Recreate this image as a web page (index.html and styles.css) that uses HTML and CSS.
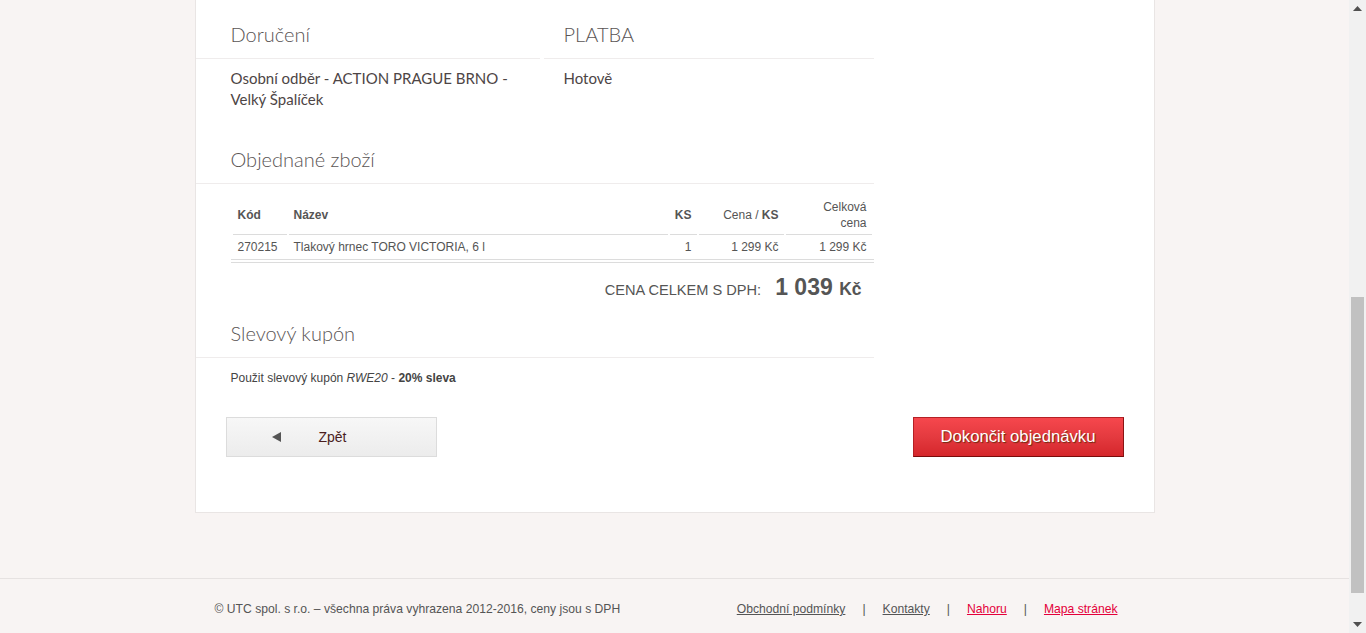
FILE: index.html
```html
<!DOCTYPE html>
<html lang="cs">
<head>
<meta charset="utf-8">
<title>Shrnutí objednávky</title>
<link rel="stylesheet" href="styles.css">
</head>
<body>
<div class="page">
  <div class="viewport">
    <main class="card">
      <div class="summary">
        <section class="col col-left">
          <h2 class="sec-title">Doručení</h2>
          <p class="detail">Osobní odběr - ACTION PRAGUE BRNO - Velký Špalíček</p>
        </section>
        <section class="col col-right">
          <h2 class="sec-title">PLATBA</h2>
          <p class="detail">Hotově</p>
        </section>
      </div>

      <section class="block">
        <h2 class="sec-title sec-spaced">Objednané zboží</h2>
        <div class="table-wrap">
          <table class="items">
            <thead>
              <tr>
                <th class="c-code">Kód</th>
                <th class="c-name">Název</th>
                <th class="c-num c-ks">KS</th>
                <th class="c-num c-price"><span class="light">Cena /</span> KS</th>
                <th class="c-num c-total light">Celková<br>cena</th>
              </tr>
            </thead>
            <tbody>
              <tr>
                <td>270215</td>
                <td>Tlakový hrnec TORO VICTORIA, 6 l</td>
                <td class="c-num">1</td>
                <td class="c-num">1 299 Kč</td>
                <td class="c-num">1 299 Kč</td>
              </tr>
            </tbody>
          </table>
        </div>
        <div class="total">
          <span class="total-label">CENA CELKEM S DPH:</span>
          <span class="total-value">1 039 <span class="total-cur">Kč</span></span>
        </div>
      </section>

      <section class="block">
        <h2 class="sec-title sec-coupon">Slevový kupón</h2>
        <p class="coupon">Použit slevový kupón <em>RWE20</em> - <strong>20% sleva</strong></p>
      </section>

      <div class="actions">
        <a class="btn btn-back" href="#"><svg class="arrow" width="9" height="10" viewBox="0 0 9 10"><path d="M0 5 9 0v10z" fill="#555"/></svg><span>Zpět</span></a>
        <a class="btn btn-finish" href="#">Dokončit objednávku</a>
      </div>
    </main>

    <footer class="footer">
      <div class="footer-inner">
        <p class="copy">© UTC spol. s r.o. – všechna práva vyhrazena 2012-2016, ceny jsou s DPH</p>
        <nav class="footer-links">
          <a href="#">Obchodní podmínky</a>
          <span class="sep">|</span>
          <a href="#">Kontakty</a>
          <span class="sep">|</span>
          <a class="red" href="#">Nahoru</a>
          <span class="sep">|</span>
          <a class="red" href="#">Mapa stránek</a>
        </nav>
      </div>
    </footer>
  </div>

  <div class="scrollbar">
    <div class="sb-btn"><svg width="9" height="5" viewBox="0 0 9 5"><path d="M4.5 0 9 5H0z" fill="#505050"/></svg></div>
    <div class="sb-track">
      <div class="sb-space"></div>
      <div class="sb-thumb"></div>
    </div>
    <div class="sb-btn"><svg width="9" height="5" viewBox="0 0 9 5"><path d="M0 0h9L4.5 5z" fill="#505050"/></svg></div>
  </div>
</div>
</body>
</html>
```

FILE: styles.css
```css
* { box-sizing: border-box; }

html, body {
  margin: 0;
  padding: 0;
}

body {
  background: #f8f4f3;
  font-family: "Liberation Sans", Arial, sans-serif;
  color: #555;
}

.page {
  display: flex;
  height: 633px;
  overflow: hidden;
}

.viewport {
  flex: 1;
  display: flex;
  flex-direction: column;
}

/* ---------- card ---------- */
.card {
  width: 960px;
  margin: 0 auto;
  background: #fff;
  border: 1px solid #e9e5e4;
  border-top: none;
  padding: 23px 0 55px;
}

.summary {
  display: flex;
  width: 678px;
  gap: 4px;
}

.col-left { width: 344px; }
.col-right { width: 330px; }

.sec-title {
  margin: 0;
  font-family: "Lato", "Open Sans", sans-serif;
  font-weight: 300;
  font-size: 20px;
  line-height: 23px;
  color: #5a5555;
  padding: 0 0 12px 35px;
  border-bottom: 1px solid #efecec;
}

.col-right .sec-title,
.col-right .detail {
  padding-left: 20px;
}

.detail {
  margin: 0;
  padding: 9px 0 0 35px;
  font-family: "Lato", "Open Sans", sans-serif;
  font-size: 15px;
  line-height: 21px;
  color: #4d4545;
  width: 335px;
}

.col-right .detail { width: auto; }

.block { width: 678px; }

.sec-spaced { padding-top: 38px; }
.sec-coupon { padding-top: 18px; }

/* ---------- table ---------- */
.table-wrap {
  margin: 12px 0 0 35px;
  width: 643px;
  border-bottom: 1px solid #dcdcdc;
  padding-bottom: 2px;
}

.items {
  width: 100%;
  border-collapse: separate;
  border-spacing: 2px 0;
  font-size: 12px;
  line-height: 16px;
  color: #555;
  border-bottom: 1px solid #dcdcdc;
}

.items th {
  font-weight: bold;
  text-align: left;
  padding: 3px 5px 3px;
  border-bottom: 1px solid #dcdcdc;
  vertical-align: middle;
}

.items th.light,
.items .light { font-weight: normal; }

.items td {
  padding: 4px 5px 4px;
}

.items .c-num { text-align: right; }
.c-code { width: 54px; }
.c-ks { width: 27px; }
.c-price { width: 85px; }
.c-total { width: 86px; }

.total {
  display: flex;
  justify-content: flex-end;
  align-items: baseline;
  gap: 14px;
  padding: 11px 12px 0 0;
  height: 41px;
}

.total-label {
  font-size: 14.6px;
  color: #555;
}

.total-value {
  font-size: 23px;
  font-weight: bold;
  color: #555;
}

.total-cur { font-size: 17.5px; }

/* ---------- coupon ---------- */
.coupon {
  margin: 0;
  padding: 12px 0 0 35px;
  font-size: 12px;
  line-height: 16px;
  color: #444;
}

.coupon strong { color: #444; }

/* ---------- buttons ---------- */
.actions {
  display: flex;
  justify-content: space-between;
  padding: 31px 30px 0;
}

.btn {
  width: 211px;
  height: 40px;
  text-decoration: none;
  display: flex;
  align-items: center;
  font-size: 14px;
}

.btn-back {
  background: linear-gradient(#f7f7f7, #ececec);
  border: 1px solid #dcdcdc;
  color: #4a1d1d;
  padding-left: 45px;
  gap: 38px;
}

.btn-back .arrow {
  flex: none;
}

.btn-finish {
  justify-content: center;
  background: linear-gradient(#f6474d, #e43a3f 50%, #d5262b);
  border: 1px solid #b52025;
  border-bottom-color: #7a0b0b;
  border-right-color: #8a1414;
  color: #fff;
  font-size: 16.7px;
  text-shadow: 1px 1px 1px #6b2a10;
}

/* ---------- footer ---------- */
.footer {
  margin-top: 65px;
  border-top: 1px solid #e6e2e1;
  flex: 1;
}

.footer-inner {
  width: 960px;
  margin: 0 auto;
  display: flex;
  justify-content: space-between;
  align-items: center;
  padding: 22px 37px 0 20px;
  font-size: 12.15px;
  line-height: 16px;
}

.copy {
  margin: 0;
  color: #555;
}

.footer-links {
  display: flex;
  gap: 17px;
}

.footer-links a {
  color: #555;
  text-decoration: underline;
}

.footer-links a.red { color: #e4003a; }

.sep { color: #555; }

/* ---------- scrollbar ---------- */
.scrollbar {
  width: 17px;
  background: #f1f1f1;
  display: flex;
  flex-direction: column;
}

.sb-btn {
  height: 17px;
  display: flex;
  align-items: center;
  justify-content: center;
}

.sb-track {
  flex: 1;
  display: flex;
  flex-direction: column;
  padding: 0 2px;
}

.sb-space { height: 280px; }

.sb-thumb {
  height: 296px;
  background: #c1c1c1;
}
```
